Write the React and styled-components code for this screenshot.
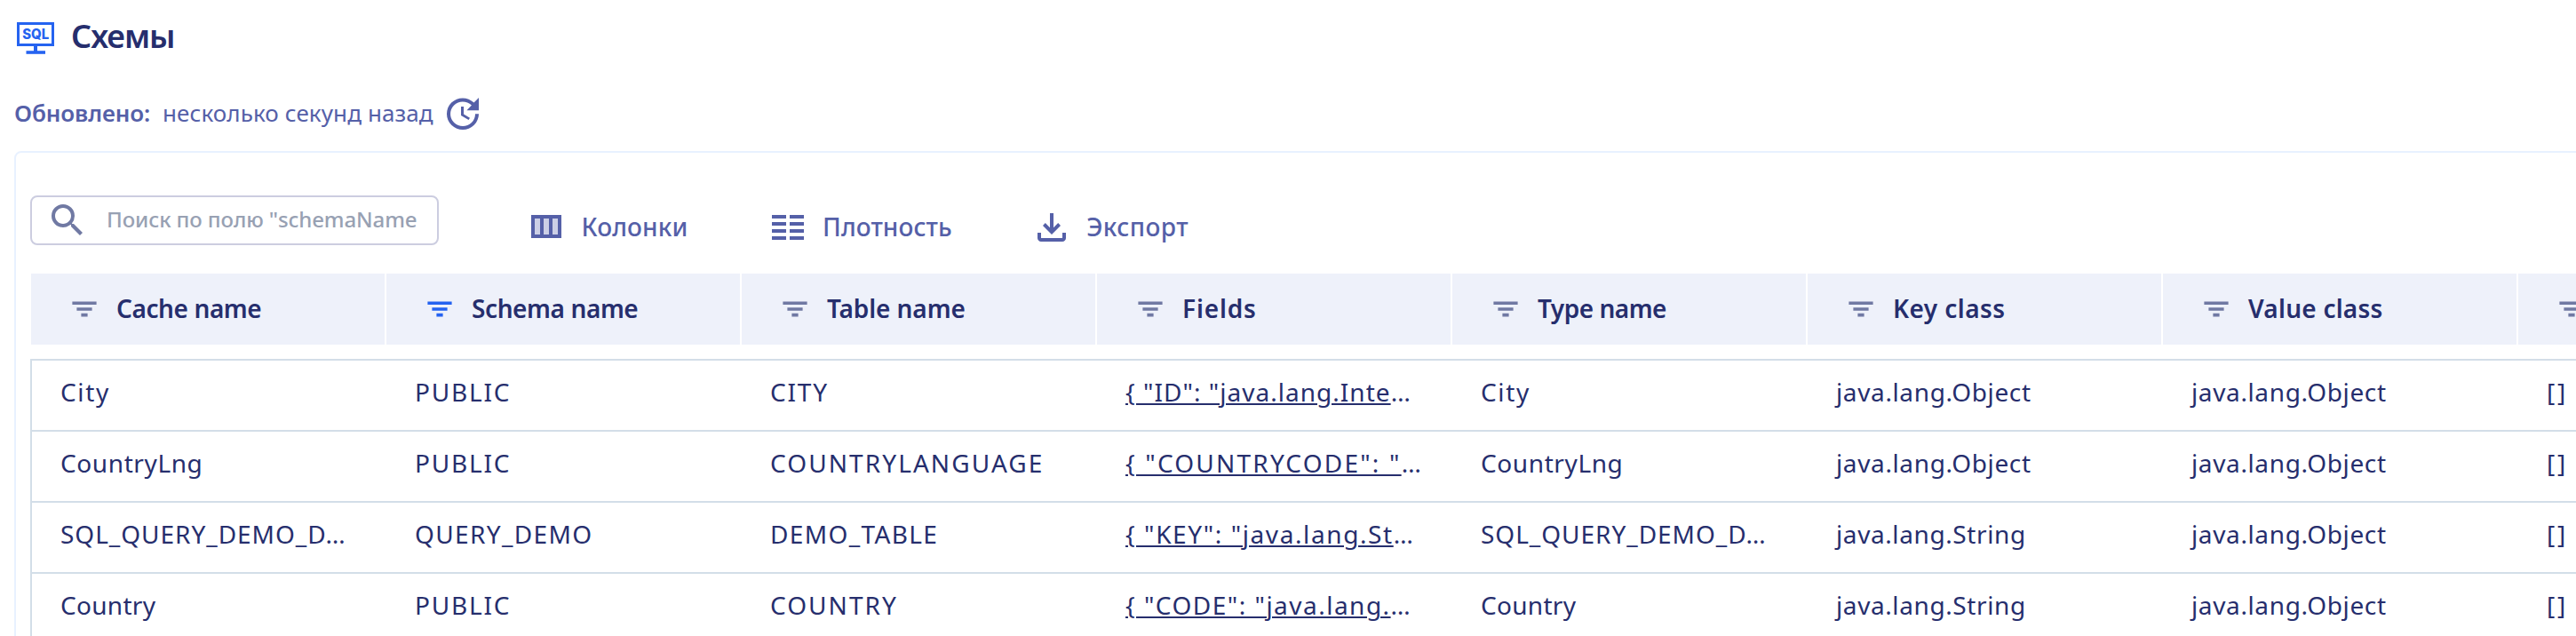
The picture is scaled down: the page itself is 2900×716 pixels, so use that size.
import React from 'react';
import styled, { createGlobalStyle } from 'styled-components';
import { MdSearch, MdUpdate } from 'react-icons/md';

const color = {
  ink: '#262e6d',
  action: '#5560a8',
  muted: '#7079a3',
  blue: '#2563f0',
  head: '#eef1fa',
  line: '#d3dee8',
};

const GlobalStyle = createGlobalStyle`
  *, *::before, *::after { box-sizing: border-box; }
  body {
    margin: 0;
    background: #fff;
    color: ${color.ink};
    font-family: "Noto Sans", "Open Sans", sans-serif;
    overflow: hidden;
  }
`;

const Page = styled.main`
  display: flex;
  flex-direction: column;
  height: 716px;
  padding-left: 16px;
  overflow: hidden;
`;

const Track = styled.span`
  letter-spacing: ${(p) => p.$t || 0}px;
  white-space: pre;
`;

const TitleBar = styled.header`
  display: flex;
  flex: none;
  align-items: center;
  gap: 19px;
  height: 86px;
  padding-left: 3px;
`;

const Title = styled.h1`
  margin: 0;
  padding-bottom: 4px;
  font-size: 36px;
  font-weight: 600;
  line-height: 44px;
`;

const Updated = styled.div`
  display: flex;
  flex: none;
  align-items: center;
  height: 84px;
  color: ${color.action};
  font-size: 26px;
`;

const UpdatedLabel = styled.strong`
  width: 167px;
  padding-bottom: 2px;
  font-weight: 600;
`;

const UpdatedValue = styled.span`
  width: 314px;
  padding-bottom: 2px;
`;

const Panel = styled.section`
  flex: none;
  width: 3260px;
  height: 700px;
  padding: 48px 16px 0;
  border: 2px solid #e8f1ff;
  border-radius: 8px;
`;

const Toolbar = styled.div`
  display: flex;
  align-items: flex-start;
  height: 88px;
`;

const SearchBox = styled.div`
  display: flex;
  align-items: center;
  gap: 20px;
  width: 460px;
  height: 56px;
  padding: 0 16px;
  border: 2px solid #cccde0;
  border-radius: 8px;
  color: ${color.muted};
`;

const SearchHint = styled.span`
  padding-bottom: 3px;
  color: #98a1b3;
  font-size: 24px;
  font-weight: 500;
`;

const Actions = styled.div`
  display: flex;
  gap: 88px;
  margin: 12px 0 0 97px;
`;

const Action = styled.div`
  display: flex;
  align-items: center;
  gap: 15.5px;
  height: 48px;
  color: ${color.action};
  font-size: 28px;
  font-weight: 500;
  span { padding-bottom: 2px; }
`;

const HeadRow = styled.div`
  display: flex;
  width: 3220px;
  height: 80px;
  margin-left: 1px;
  margin-bottom: 16px;
  background: ${color.head};
`;

const HeadCell = styled.div`
  display: flex;
  flex: none;
  align-items: center;
  gap: 18px;
  width: 400px;
  padding-left: 42px;
  border-right: 2px solid #fff;
  color: ${(p) => (p.$active ? color.blue : color.muted)};
`;

const HeadLabel = styled.span`
  padding-bottom: 2px;
  color: ${color.ink};
  font-size: 28px;
  font-weight: 600;
`;

const Body = styled.div`
  width: 3220px;
  border-left: 2px solid ${color.line};
`;

const Row = styled.div`
  display: flex;
  height: 80px;
  border-top: 2px solid ${color.line};
`;

const Cell = styled.div`
  flex: none;
  width: 400px;
  padding-left: 31px;
  font-size: 28px;
  line-height: 70px;
  white-space: pre;
  &:first-child { padding-left: 32px; }
`;

const FieldsLink = styled.a`
  text-decoration: underline;
  text-decoration-thickness: 2px;
  text-underline-offset: 2px;
`;

const SqlIcon = () => (
  <svg width="42" height="36" viewBox="0 0 42 36" fill="none">
    <rect x="1.5" y="1.5" width="39" height="24" stroke={color.blue} strokeWidth="3" />
    <path d="M21 26v7" stroke={color.blue} strokeWidth="4" />
    <path d="M10.5 34h21.5" stroke={color.blue} strokeWidth="3.6" />
    <text
      x="21.2" y="19" textAnchor="middle" textLength="30" lengthAdjust="spacingAndGlyphs"
      fontFamily="Inter, sans-serif" fontWeight="800" fontSize="15.4" fill={color.blue}
    >
      SQL
    </text>
  </svg>
);

const FilterIcon = () => (
  <svg width="36" height="36" viewBox="0 0 36 36">
    <path stroke="currentColor" strokeWidth="3.6" d="M4.4 11.2h27.2M9.4 18h17.2M14.4 24.6h7.2" />
  </svg>
);

const ColumnsIcon = () => (
  <svg width="48" height="48" viewBox="0 0 48 48">
    <path fill="currentColor" d="M7 10h34v26H7z" />
    <path fill="#cccfe6" d="M11 14h6v18h-6zM21 14h6v18h-6zM31 14h6v18h-6z" />
  </svg>
);

const DensityIcon = () => (
  <svg width="48" height="48" viewBox="0 0 48 48">
    <path
      stroke="currentColor" strokeWidth="4"
      d="M6 12h16M26 12h16M6 20h16M26 20h16M6 28h16M26 28h16M6 36h16M26 36h16"
    />
  </svg>
);

const ExportIcon = () => (
  <svg width="48" height="48" viewBox="0 -960 960 960" fill="currentColor">
    <path d="M480-320 280-520l56-58 104 104v-326h80v326l104-104 56 58-200 200ZM240-160q-33 0-56.5-23.5T160-240v-120h80v120h480v-120h80v120q0 33-23.5 56.5T720-160H240Z" />
  </svg>
);

const columns = [
  ['Cache name', -0.4],
  ['Schema name', -0.4],
  ['Table name', -0.1],
  ['Fields', 0.84],
  ['Type name', -0.5],
  ['Key class', 0.45],
  ['Value class', 0.24],
  ['', 0],
];

const OBJ = ['java.lang.Object', 0.63];
const STR = ['java.lang.String', 0.6];
const PUBLIC = ['PUBLIC', 1.8];

const rows = [
  {
    name: ['City', 1.66], schema: PUBLIC, table: ['CITY', 1.8],
    fields: ['{ "ID": "java.lang.Inte', 1.03], key: OBJ,
  },
  {
    name: ['CountryLng', 0.6], schema: PUBLIC, table: ['COUNTRYLANGUAGE', 2.08],
    fields: ['{ "COUNTRYCODE": "', 2.2], key: OBJ,
  },
  {
    name: ['SQL_QUERY_DEMO_D…', 0.97], schema: ['QUERY_DEMO', 1.35], table: ['DEMO_TABLE', 1.35],
    fields: ['{ "KEY": "java.lang.St', 1.6], key: STR,
  },
  {
    name: ['Country', 0.3], schema: PUBLIC, table: ['COUNTRY', 2.05],
    fields: ['{ "CODE": "java.lang.', 1.49], key: STR,
  },
];

const TextCell = ({ value }) => (
  <Cell><Track $t={value[1]}>{value[0]}</Track></Cell>
);

export default function App() {
  return (
    <Page>
      <GlobalStyle />
      <TitleBar>
        <SqlIcon />
        <Title><Track $t={-1}>Схемы</Track></Title>
      </TitleBar>
      <Updated>
        <UpdatedLabel><Track $t={-0.11}>Обновлено:</Track></UpdatedLabel>
        <UpdatedValue><Track $t={0.1}>несколько секунд назад</Track></UpdatedValue>
        <MdUpdate size={48} />
      </Updated>
      <Panel>
        <Toolbar>
          <SearchBox>
            <MdSearch size={48} />
            <SearchHint><Track $t={-0.1}>Поиск по полю "schemaName</Track></SearchHint>
          </SearchBox>
          <Actions>
            <Action><ColumnsIcon /><Track $t={0.16}>Колонки</Track></Action>
            <Action><DensityIcon /><Track $t={0.09}>Плотность</Track></Action>
            <Action><ExportIcon /><Track $t={0.43}>Экспорт</Track></Action>
          </Actions>
        </Toolbar>
        <HeadRow>
          {columns.map(([label, t], i) => (
            <HeadCell key={i} $active={label === 'Schema name'}>
              <FilterIcon />
              <HeadLabel><Track $t={t}>{label}</Track></HeadLabel>
            </HeadCell>
          ))}
        </HeadRow>
        <Body>
          {rows.map((row, i) => (
            <Row key={i}>
              <TextCell value={row.name} />
              <TextCell value={row.schema} />
              <TextCell value={row.table} />
              <Cell>
                <FieldsLink><Track $t={row.fields[1]}>{row.fields[0]}</Track></FieldsLink>…
              </Cell>
              <TextCell value={row.name} />
              <TextCell value={row.key} />
              <TextCell value={OBJ} />
              <TextCell value={['[]', 2.8]} />
            </Row>
          ))}
        </Body>
      </Panel>
    </Page>
  );
}
